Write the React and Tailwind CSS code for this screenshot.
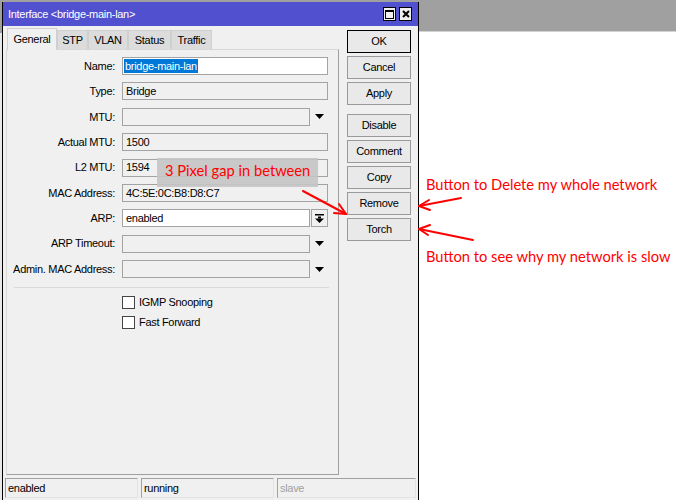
import React from 'react';

const uiFont = { fontFamily: '"Liberation Sans", Arial, sans-serif' };
const noteFont = { fontFamily: 'Lato, "Open Sans", sans-serif' };

// 下拉三角
function DropTriangle() {
  return (
    <svg width="9" height="5" viewBox="0 0 9 5">
      <polygon points="0,0 9,0 4.5,5" fill="#000" />
    </svg>
  );
}

// ARP 右侧按钮图标
function ArpIcon() {
  return (
    <svg width="9" height="9" viewBox="0 0 9 9">
      <rect x="0" y="0" width="9" height="1.5" fill="#000" />
      <rect x="3" y="2.5" width="3" height="2" fill="#000" />
      <polygon points="0,4.5 9,4.5 4.5,9" fill="#000" />
    </svg>
  );
}

function Field({ label, value, kind = 'readonly', drop = false, arpBtn = false, selected = false }) {
  const bg = kind === 'edit' ? 'bg-white' : 'bg-[#f0f0f0]';
  return (
    <div className="flex items-center h-[18px]">
      <div className="w-[109px] pr-[1px] text-right text-black whitespace-nowrap">{label}:</div>
      <div className="ml-[6px] flex items-center">
        <div
          className={`h-[18px] border border-[#a3a3a3] ${bg} flex items-center px-[1px] ${
            drop || arpBtn ? 'w-[188px]' : 'w-[206px]'
          }`}
        >
          {selected ? (
            <span className="bg-[#0078d7] text-white leading-[14px] px-[1px]">{value}</span>
          ) : (
            <span className="pl-[2px] text-black">{value}</span>
          )}
        </div>
        {drop && (
          <div className="w-[18px] h-[18px] flex items-center justify-center">
            <DropTriangle />
          </div>
        )}
        {arpBtn && (
          <div className="ml-[1px] w-[17px] h-[18px] border border-[#a3a3a3] bg-[#f0f0f0] flex items-center justify-center">
            <ArpIcon />
          </div>
        )}
      </div>
    </div>
  );
}

function Check({ label }) {
  return (
    <div className="flex items-center h-[13px]">
      <div className="w-[13px] h-[13px] border border-[#444] bg-white" />
      <span className="ml-[4px] text-black">{label}</span>
    </div>
  );
}

function Btn({ children, primary = false }) {
  return (
    <div
      className={`w-[64px] h-[23px] flex items-center justify-center bg-[#e9e9e9] text-black ${
        primary ? 'border border-black' : 'border border-[#9a9a9a]'
      }`}
    >
      {children}
    </div>
  );
}

function Tab({ label, active = false, w }) {
  return (
    <div
      className={`${w} flex items-center justify-center border border-b-0 ${
        active
          ? 'h-[22px] bg-[#f0f0f0] border-[#d0d0d0] -mb-[1px] relative z-10'
          : 'h-[19px] bg-[#dcdcdc] border-[#cfcfcf]'
      }`}
    >
      {label}
    </div>
  );
}

export default function App() {
  return (
    <div
      className="relative w-[676px] h-[500px] overflow-hidden bg-white flex text-[11px] tracking-[-0.3px]"
      style={uiFont}
    >
      {/* 左侧背景窄条 */}
      <div className="w-[2px] flex flex-col">
        <div className="h-[33px] bg-[#a0a0a0]" />
        <div className="flex-1 bg-[#e8e8e8]" />
      </div>

      {/* 窗口 */}
      <div className="w-[417px] flex flex-col bg-[#a0a0a0]">
        <div className="h-[2px]" />
        <div className="flex-1 flex flex-col border-x border-black bg-[#f0f0f0]">
          {/* 标题栏 */}
          <div className="h-[24px] bg-[#5151d0] flex items-center pl-[5px] pr-[6px]">
            <span className="text-white text-[11px] flex-1">Interface &lt;bridge-main-lan&gt;</span>
            <div className="flex gap-[3px]">
              <div className="w-[13px] h-[14px] bg-[#f0f0f0] border border-black flex items-center justify-center">
                <div className="w-[9px] h-[9px] border border-black border-t-2" />
              </div>
              <div className="w-[13px] h-[14px] bg-[#f0f0f0] border border-black flex items-center justify-center">
                <svg width="8" height="8" viewBox="0 0 8 8">
                  <path d="M1 1 L7 7 M7 1 L1 7" stroke="#000" strokeWidth="2" />
                </svg>
              </div>
            </div>
          </div>

          {/* 主体 */}
          <div className="flex">
            <div className="pl-[3px] pt-[1px]">
              {/* 标签页 */}
              <div className="flex items-end pl-[1px] h-[22px]">
                <Tab label="General" active w="w-[50px]" />
                <Tab label="STP" w="w-[31px]" />
                <Tab label="VLAN" w="w-[40px]" />
                <Tab label="Status" w="w-[43px]" />
                <Tab label="Traffic" w="w-[41px]" />
              </div>
              {/* 内容面板 */}
              <div className="w-[333px] h-[426px] border border-[#d8d8d8] border-r-[#a0a0a0] border-b-[#a0a0a0] pt-[7px]">
                <div className="flex flex-col gap-[7.375px]">
                  <Field label="Name" value="bridge-main-lan" kind="edit" selected />
                  <Field label="Type" value="Bridge" />
                  <Field label="MTU" value="" drop />
                  <Field label="Actual MTU" value="1500" />
                  <Field label="L2 MTU" value="1594" />
                  <Field label="MAC Address" value="4C:5E:0C:B8:D8:C7" />
                  <Field label="ARP" value="enabled" kind="edit" arpBtn />
                  <Field label="ARP Timeout" value="" drop />
                  <Field label="Admin. MAC Address" value="" drop />
                </div>
                <div className="ml-[7px] mt-[9px] w-[315px] h-px bg-[#d9d9d9]" />
                <div className="ml-[115px] mt-[8px] flex flex-col gap-[7px]">
                  <Check label="IGMP Snooping" />
                  <Check label="Fast Forward" />
                </div>
              </div>
            </div>

            {/* 按钮列 */}
            <div className="ml-[8px] pt-[4px] flex flex-col">
              <div className="flex flex-col gap-[3px]">
                <Btn primary>OK</Btn>
                <Btn>Cancel</Btn>
                <Btn>Apply</Btn>
              </div>
              <div className="mt-[9px] flex flex-col gap-[3px]">
                <Btn>Disable</Btn>
                <Btn>Comment</Btn>
                <Btn>Copy</Btn>
                <Btn>Remove</Btn>
                <Btn>Torch</Btn>
              </div>
            </div>
          </div>

          {/* 状态栏 */}
          <div className="mt-[3px] pl-[2px] flex gap-[3px]">
            <div className="w-[133px] h-[20px] border border-[#a0a0a0] border-r-[#e3e3e3] border-b-[#e3e3e3] flex items-center pl-[2px] text-black">
              enabled
            </div>
            <div className="w-[133px] h-[20px] border border-[#a0a0a0] border-r-[#e3e3e3] border-b-[#e3e3e3] flex items-center pl-[2px] text-black">
              running
            </div>
            <div className="w-[139px] h-[20px] border border-[#a0a0a0] border-r-[#e3e3e3] border-b-[#e3e3e3] flex items-center pl-[2px] text-[#a0a0a0]">
              slave
            </div>
          </div>
        </div>
      </div>

      {/* 右侧背景 */}
      <div className="flex-1 flex flex-col">
        <div className="h-[32px] bg-[#a0a0a0] border-b border-[#d4d4d4]" />
      </div>

      {/* 标注：灰色高亮框 */}
      <div
        className="absolute left-[157px] top-[158px] w-[161px] h-[29px] bg-[#c4c4c4]/90 flex items-center pl-[8px] pb-[4px] text-[#ff0000] text-[14.7px] tracking-normal whitespace-nowrap"
        style={noteFont}
      >
        3 Pixel gap in between
      </div>

      {/* 标注文字 */}
      <div
        className="absolute left-[426px] top-[173px] text-[#ff0000] text-[14.7px] tracking-normal whitespace-nowrap"
        style={noteFont}
      >
        Button to Delete my whole network
      </div>
      <div
        className="absolute left-[426px] top-[245px] text-[#ff0000] text-[14.7px] tracking-normal whitespace-nowrap"
        style={noteFont}
      >
        Button to see why my network is slow
      </div>

      {/* 红色箭头 */}
      <svg className="absolute left-0 top-0 pointer-events-none" width="676" height="500">
        <g stroke="#ff0000" strokeWidth="2" fill="none" strokeLinecap="round">
          <path d="M303 191 L346 214" />
          <path d="M346 214 L334 213 M346 214 L339 204" />
          <path d="M461 198 L419 206" />
          <path d="M419 206 L429 200 M419 206 L430 210" />
          <path d="M473 240 L419 229" />
          <path d="M419 229 L430 225 M419 229 L428 235" />
        </g>
      </svg>
    </div>
  );
}
